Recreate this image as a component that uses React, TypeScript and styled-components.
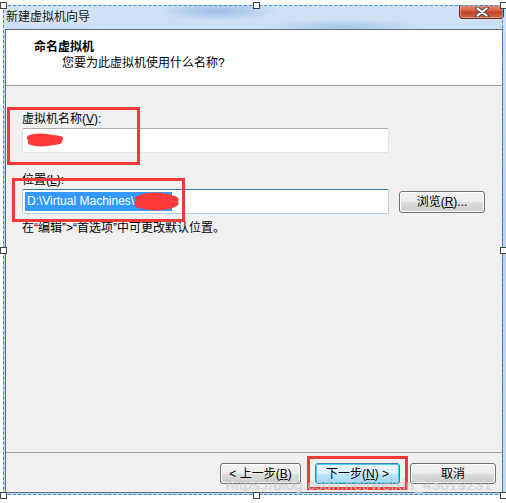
import styled, { createGlobalStyle } from "styled-components";

const GlobalStyle = createGlobalStyle`
  html, body {
    margin: 0;
    padding: 0;
    background: #ffffff;
  }
  body {
    font-family: "Liberation Sans", "Noto Sans CJK SC", sans-serif;
    font-size: 12px;
    color: #000;
  }
`

const Page = styled.div`
  position: relative;
  width: 506px;
  height: 503px;
  overflow: hidden;
  padding: 5px 0 0 3px;
  box-sizing: border-box;
`

const Window = styled.div`
  width: 503px;
  height: 490px;
  box-sizing: border-box;
  padding: 0 3px 2px 2px;
  display: flex;
  flex-direction: column;
  background:
    radial-gradient(ellipse 60px 10px at 215px 6px, rgba(140, 180, 225, 0.8), transparent),
    radial-gradient(ellipse 80px 8px at 340px 22px, rgba(150, 190, 230, 0.7), transparent),
    linear-gradient(to bottom, #cfe1f4 0%, #b9d2ee 45%, #c4daf1 100%);
`

const TitleBar = styled.div`
  height: 24px;
  display: flex;
  align-items: flex-start;
  justify-content: space-between;
`

const TitleText = styled.span`
  padding: 3px 0 0 1px;
  font-family: "Noto Sans CJK SC", sans-serif;
  font-size: 12px;
  line-height: 16px;
  color: #111;
  text-shadow: 0 0 6px rgba(255, 255, 255, 0.9);
`

const CloseButton = styled.div`
  width: 45px;
  height: 14px;
  margin-right: -1px;
  box-sizing: border-box;
  border: 1px solid #6a2e22;
  border-top: none;
  border-radius: 0 0 4px 4px;
  background: linear-gradient(to bottom, #e6957c 0%, #d35b40 45%, #c2402a 55%, #cf6a4c 100%);
  box-shadow: inset 0 0 0 1px rgba(255, 200, 180, 0.45);
  display: flex;
  align-items: center;
  justify-content: center;
`

const Client = styled.div`
  flex: 1;
  display: flex;
  flex-direction: column;
  border: 1px solid #5d6b7c;
  background: #f0f0f0;
`

const Header = styled.div`
  height: 56px;
  box-sizing: border-box;
  padding: 8px 0 0 28px;
  background: #ffffff;
  border-bottom: 1px solid #a0a0a0;
`

const Heading = styled.div`
  font-family: "Noto Sans CJK SC", sans-serif;
  font-weight: bold;
  font-size: 12px;
  line-height: 16px;
`

const SubHeading = styled.div`
  margin: 1px 0 0 28px;
  font-size: 12px;
  line-height: 16px;
`

const Body = styled.div`
  flex: 1;
  padding: 25px 0 0 16px;
  display: flex;
  flex-direction: column;
  align-items: flex-start;
`

const Label = styled.div<{ $gap?: number }>`
  margin-top: ${p => p.$gap ?? 0}px;
  font-size: 12px;
  line-height: 16px;
`

const Row = styled.div`
  display: flex;
  align-items: center;
  margin-top: 1px;
`

const TextBox = styled.div<{ $focused?: boolean }>`
  position: relative;
  width: 367px;
  height: 25px;
  box-sizing: border-box;
  background: #ffffff;
  border: 1px solid ${p => (p.$focused ? "#b5cfe7" : "#e2e3ea")};
  border-top-color: ${p => (p.$focused ? "#3d7bad" : "#abadb3")};
  border-radius: 2px;
  display: flex;
  align-items: center;
  padding-left: 2px;
`

const Selected = styled.span`
  background: #3399ff;
  color: #ffffff;
  line-height: 19px;
  padding: 0 1px 0 2px;
  width: 147px;
  white-space: nowrap;
  box-sizing: border-box;
`

const Scribble = styled.svg`
  position: absolute;
  overflow: visible;
`

const Button = styled.div<{ $width: number; $primary?: boolean }>`
  width: ${p => p.$width}px;
  height: 21px;
  box-sizing: border-box;
  border: 1px solid ${p => (p.$primary ? "#3c7fb1" : "#707070")};
  border-radius: 3px;
  background: ${p =>
    p.$primary
      ? "linear-gradient(to bottom, #eaf6fd 0%, #d9f0fc 50%, #bee6fd 51%, #a7d9f5 100%)"
      : "linear-gradient(to bottom, #f2f2f2 0%, #ebebeb 50%, #dddddd 51%, #cfcfcf 100%)"};
  box-shadow: inset 0 0 0 1px ${p => (p.$primary ? "#48d0f6" : "#fcfcfc")};
  display: flex;
  align-items: center;
  justify-content: center;
  font-size: 12px;
  line-height: 16px;
  white-space: nowrap;
`

const Browse = styled(Button)`
  margin-left: 10px;
  height: 22px;
`

const Hint = styled.div`
  margin-top: 6px;
  font-size: 12px;
  line-height: 16px;
`

const Footer = styled.div`
  height: 40px;
  box-sizing: border-box;
  border-top: 1px solid #a0a0a0;
  padding: 10px 6px 0 0;
  display: flex;
  justify-content: flex-end;
  align-items: flex-start;
`

const Spacer = styled.div<{ $w: number }>`
  width: ${p => p.$w}px;
`

/* annotations drawn over the screenshot */
const RedBox = styled.div<{ $x: number; $y: number; $w: number; $h: number }>`
  position: absolute;
  left: ${p => p.$x}px;
  top: ${p => p.$y}px;
  width: ${p => p.$w}px;
  height: ${p => p.$h}px;
  box-sizing: border-box;
  border: 3px solid #f03a3a;
  pointer-events: none;
`

const Marquee = styled.div`
  position: absolute;
  left: 3px;
  top: 5px;
  width: 500px;
  height: 490px;
  box-sizing: border-box;
  border: 1px dashed #3c8ce7;
  pointer-events: none;
`

const Handle = styled.div<{ $x: number; $y: number }>`
  position: absolute;
  left: ${p => p.$x - 3}px;
  top: ${p => p.$y - 3}px;
  width: 5px;
  height: 5px;
  background: #ffffff;
  border: 1px solid #444;
`

const Watermark = styled.div`
  position: absolute;
  left: 226px;
  top: 476px;
  font-family: "Liberation Sans", sans-serif;
  font-size: 15px;
  letter-spacing: 0.3px;
  color: rgba(255, 255, 255, 0.6);
  text-shadow: 0 0 1px rgba(0, 0, 0, 0.35);
  white-space: nowrap;
  pointer-events: none;
`

const handles = [
  [3, 5], [256, 5], [503, 5],
  [3, 250], [503, 250],
  [3, 495], [256, 495], [503, 495],
]

function App() {
  return (
    <Page>
      <GlobalStyle />
      <Window>
        <TitleBar>
          <TitleText>新建虚拟机向导</TitleText>
          <CloseButton>
            <svg width="16" height="10" viewBox="0 0 16 10">
              <path d="M3 1 L13 9 M13 1 L3 9" stroke="#4a4a4a" strokeWidth="4" strokeLinecap="round" />
              <path d="M3.5 1.5 L12.5 8.5 M12.5 1.5 L3.5 8.5" stroke="#ffffff" strokeWidth="2.2" strokeLinecap="round" />
            </svg>
          </CloseButton>
        </TitleBar>
        <Client>
          <Header>
            <Heading>命名虚拟机</Heading>
            <SubHeading>您要为此虚拟机使用什么名称?</SubHeading>
          </Header>
          <Body>
            <Label>虚拟机名称(<u>V</u>):</Label>
            <Row>
              <TextBox>
                <Scribble width="40" height="16" style={{ left: 2, top: 4 }}>
                  <path d="M5 5 C12 2, 22 4, 35 6 M6 9 C14 12, 24 10, 34 8 M10 7 L30 7" stroke="#ff3a3a" strokeWidth="6" strokeLinecap="round" fill="none" />
                </Scribble>
              </TextBox>
            </Row>
            <Label $gap={19}>位置(<u>L</u>):</Label>
            <Row>
              <TextBox $focused>
                <Selected>D:\Virtual Machines\</Selected>
                <Scribble width="44" height="20" style={{ left: 112, top: 2 }}>
                  <path d="M4 7 C14 3, 30 3, 40 8 M3 12 C14 16, 30 16, 40 11 M6 10 L38 10" stroke="#ff3a3a" strokeWidth="7" strokeLinecap="round" fill="none" />
                </Scribble>
              </TextBox>
              <Browse $width={86}>浏览(<u>R</u>)...</Browse>
            </Row>
            <Hint>在“编辑”&gt;“首选项”中可更改默认位置。</Hint>
          </Body>
          <Footer>
            <Button $width={81}>&lt; 上一步(<u>B</u>)</Button>
            <Spacer $w={14} />
            <Button $width={85} $primary>下一步(<u>N</u>) &gt;</Button>
            <Spacer $w={10} />
            <Button $width={86}>取消</Button>
          </Footer>
        </Client>
      </Window>

      <RedBox $x={7} $y={107} $w={133} $h={58} />
      <RedBox $x={12} $y={178} $w={173} $h={44} />
      <RedBox $x={307} $y={456} $w={101} $h={34} />

      <Watermark>https://blog.csdn.net/weixin_45019231</Watermark>

      <Marquee />
      {handles.map(([x, y]) => (
        <Handle key={`${x}-${y}`} $x={x} $y={y} />
      ))}
    </Page>
  )
}

export default App;
